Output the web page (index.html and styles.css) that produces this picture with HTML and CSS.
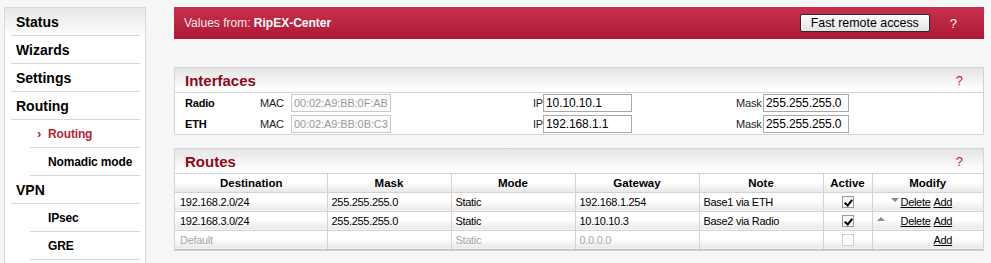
FILE: index.html
```html
<!DOCTYPE html>
<html lang="en">

<head>
    <meta charset="UTF-8">
    <meta name="viewport" content="width=device-width, initial-scale=1.0">
    <title>RipEX - Routing</title>
    <link rel="stylesheet" href="styles.css">
</head>

<body>
    <div class="page">
        <aside class="sidebar">
            <ul class="menu">
                <li class="menu-item top">Status</li>
                <li class="menu-item top">Wizards</li>
                <li class="menu-item top">Settings</li>
                <li class="menu-item top">Routing</li>
                <li class="menu-item sub active">Routing</li>
                <li class="menu-item sub">Nomadic mode</li>
                <li class="menu-item top">VPN</li>
                <li class="menu-item sub">IPsec</li>
                <li class="menu-item sub">GRE</li>
            </ul>
        </aside>

        <main class="content">
            <div class="topbar">
                <span class="values">Values from: <b>RipEX-Center</b></span>
                <button class="remote-btn">Fast remote access</button>
                <span class="help light">?</span>
            </div>

            <section class="panel">
                <div class="panel-head">
                    <h2>Interfaces</h2>
                    <span class="help">?</span>
                </div>
                <div class="iface-grid">
                    <span class="iface-name">Radio</span>
                    <span class="lbl">MAC</span>
                    <span><input class="field mac" type="text" value="00:02:A9:BB:0F:AB" disabled></span>
                    <span class="lbl">IP</span>
                    <span><input class="field ip" type="text" value="10.10.10.1"></span>
                    <span class="lbl">Mask</span>
                    <span><input class="field mask" type="text" value="255.255.255.0"></span>

                    <span class="iface-name">ETH</span>
                    <span class="lbl">MAC</span>
                    <span><input class="field mac" type="text" value="00:02:A9:BB:0B:C3" disabled></span>
                    <span class="lbl">IP</span>
                    <span><input class="field ip" type="text" value="192.168.1.1"></span>
                    <span class="lbl">Mask</span>
                    <span><input class="field mask" type="text" value="255.255.255.0"></span>
                </div>
            </section>

            <section class="panel">
                <div class="panel-head">
                    <h2>Routes</h2>
                    <span class="help">?</span>
                </div>
                <table class="routes">
                    <colgroup>
                        <col style="width: 152px">
                        <col style="width: 124px">
                        <col style="width: 124px">
                        <col style="width: 124px">
                        <col style="width: 124px">
                        <col style="width: 49px">
                        <col>
                    </colgroup>
                    <thead>
                        <tr>
                            <th>Destination</th>
                            <th>Mask</th>
                            <th>Mode</th>
                            <th>Gateway</th>
                            <th>Note</th>
                            <th>Active</th>
                            <th>Modify</th>
                        </tr>
                    </thead>
                    <tbody>
                        <tr>
                            <td>192.168.2.0/24</td>
                            <td>255.255.255.0</td>
                            <td>Static</td>
                            <td>192.168.1.254</td>
                            <td>Base1 via ETH</td>
                            <td class="center"><span class="check on"></span></td>
                            <td>
                                <div class="modify">
                                    <span></span>
                                    <span class="arrow down"></span>
                                    <a href="#">Delete</a>
                                    <a href="#">Add</a>
                                </div>
                            </td>
                        </tr>
                        <tr>
                            <td>192.168.3.0/24</td>
                            <td>255.255.255.0</td>
                            <td>Static</td>
                            <td>10.10.10.3</td>
                            <td>Base2 via Radio</td>
                            <td class="center"><span class="check on"></span></td>
                            <td>
                                <div class="modify">
                                    <span class="arrow up"></span>
                                    <span></span>
                                    <a href="#">Delete</a>
                                    <a href="#">Add</a>
                                </div>
                            </td>
                        </tr>
                        <tr class="default-row">
                            <td>Default</td>
                            <td></td>
                            <td>Static</td>
                            <td>0.0.0.0</td>
                            <td></td>
                            <td class="center"><span class="check off"></span></td>
                            <td>
                                <div class="modify">
                                    <span></span>
                                    <span></span>
                                    <span></span>
                                    <a href="#">Add</a>
                                </div>
                            </td>
                        </tr>
                    </tbody>
                </table>
            </section>

            <section class="panel next"></section>
        </main>
    </div>
</body>

</html>
```

FILE: styles.css
```css
:root {
    --red: #b71f3b;
    --dark-red: #8c0a1b;
    --line: #d3d3d3;
    --bg: #f6f6f6;
}

* {
    margin: 0;
    padding: 0;
    box-sizing: border-box;
    font-family: 'Liberation Sans', Arial, sans-serif;
}

html,
body {
    height: 100%;
}

body {
    background-color: var(--bg);
    color: #000;
    overflow: hidden;
}

.page {
    display: flex;
    gap: 28px;
    height: 100%;
    padding: 7px 7px 0 4px;
}

/* Sidebar */

.sidebar {
    width: 142px;
    flex-shrink: 0;
    border: 1px solid #d9d9d9;
    border-bottom: none;
    background: linear-gradient(#e6e6e6, #fff 28px);
}

.menu {
    list-style: none;
    padding: 0 5px 0 6px;
}

.menu-item {
    height: 28px;
    line-height: 28px;
    border-bottom: 1px solid #d8d8d8;
    font-weight: bold;
}

.menu-item.top {
    font-size: 14px;
    padding-left: 5px;
}

.menu-item.sub {
    font-size: 12px;
    letter-spacing: -0.15px;
    margin-left: 19px;
    padding-left: 18px;
}

.menu-item.active {
    color: var(--red);
}

.menu-item.active::before {
    content: "\203A";
    display: inline-block;
    width: 11px;
    margin-left: -11px;
    font-size: 13px;
}

/* Content */

.content {
    flex: 1;
    overflow: hidden;
}

.topbar {
    height: 32px;
    display: flex;
    align-items: center;
    padding: 0 27px 0 10px;
    background: linear-gradient(#c9304c, #ac1a35);
    color: #fff;
    font-size: 12px;
    margin-bottom: 28px;
}

.values {
    color: #f6e6ea;
}

.values b {
    color: #fff;
}

.remote-btn {
    margin-left: auto;
    width: 130px;
    height: 18px;
    border: 1px solid #2b2b2b;
    border-radius: 2px;
    background: linear-gradient(#fbfbfb, #e4e4e4);
    font-size: 12.4px;
    color: #000;
    margin-right: 20px;
}

.help {
    font-size: 13px;
    color: #b8203a;
}

.help.light {
    color: #fff;
}

.panel {
    background-color: #fff;
    border: 1px solid var(--line);
    margin-bottom: 13px;
}

.panel-head {
    height: 25px;
    display: flex;
    align-items: center;
    justify-content: space-between;
    padding: 0 20px 0 10px;
    background: linear-gradient(#e4e4e4, #fff 90%);
    border-bottom: 1px solid var(--line);
}

.panel-head h2 {
    font-size: 15px;
    color: var(--dark-red);
}

/* Interfaces */

.iface-grid {
    display: grid;
    grid-template-columns: 75px 31px 242px 10px 193px 27px 1fr;
    row-gap: 3px;
    align-items: center;
    padding: 1px 0 1px 10px;
    font-size: 11px;
    letter-spacing: -0.2px;
}

.iface-name {
    font-weight: bold;
}

.lbl {
    color: #1b1b1b;
}

.field {
    display: block;
    height: 18px;
    border: 1px solid #a8a8a8;
    padding: 0 2px;
    font-size: 12px;
    letter-spacing: -0.1px;
    color: #000;
    background-color: #fff;
    outline: none;
}

.field.mac {
    width: 100px;
    font-size: 11px;
    color: #9a9a9a;
    border-color: #cacaca;
    background-color: #fcfcfc;
}

.field.ip {
    width: 89px;
}

.field.mask {
    width: 86px;
}

/* Routes table */

.routes {
    width: 100%;
    table-layout: fixed;
    border-collapse: collapse;
    font-size: 11px;
}

.routes th,
.routes td {
    height: 19px;
    border: 1px solid var(--line);
    background: linear-gradient(#fff 45%, #e8e8e8);
    padding: 0 4px;
    white-space: nowrap;
    overflow: hidden;
}

.routes tr > :first-child {
    border-left: none;
    padding-left: 5px;
}

.routes tr > :last-child {
    border-right: none;
}

.routes thead th {
    border-top: none;
    font-size: 11.5px;
    height: 18px;
}

.routes tbody tr:last-child td {
    border-bottom: 1px solid #c0c0c0;
}

.routes td {
    letter-spacing: -0.3px;
}

.routes .center {
    text-align: center;
}

.default-row td {
    color: #a8a8a8;
}

.check {
    display: inline-block;
    width: 12px;
    height: 12px;
    border: 1px solid #9a9a9a;
    background: linear-gradient(#f2f2f2, #fff);
    vertical-align: middle;
    position: relative;
}

.check.on::after {
    content: "";
    position: absolute;
    left: 3px;
    top: 1px;
    width: 3px;
    height: 6px;
    border: solid #000;
    border-width: 0 2px 2px 0;
    transform: rotate(40deg);
}

.check.off {
    border-color: #cdcdcd;
    background: #fafafa;
}

.modify {
    display: grid;
    grid-template-columns: 14px 10px 33px auto;
    align-items: center;
}

.modify a {
    color: #000;
    text-decoration: underline;
}

.arrow {
    width: 0;
    height: 0;
    border-left: 4px solid transparent;
    border-right: 4px solid transparent;
}

.arrow.down {
    border-top: 4px solid #8a8a8a;
    margin-bottom: 4px;
}

.arrow.up {
    border-bottom: 4px solid #8a8a8a;
    margin-bottom: 4px;
}

.panel.next {
    height: 40px;
}
```
